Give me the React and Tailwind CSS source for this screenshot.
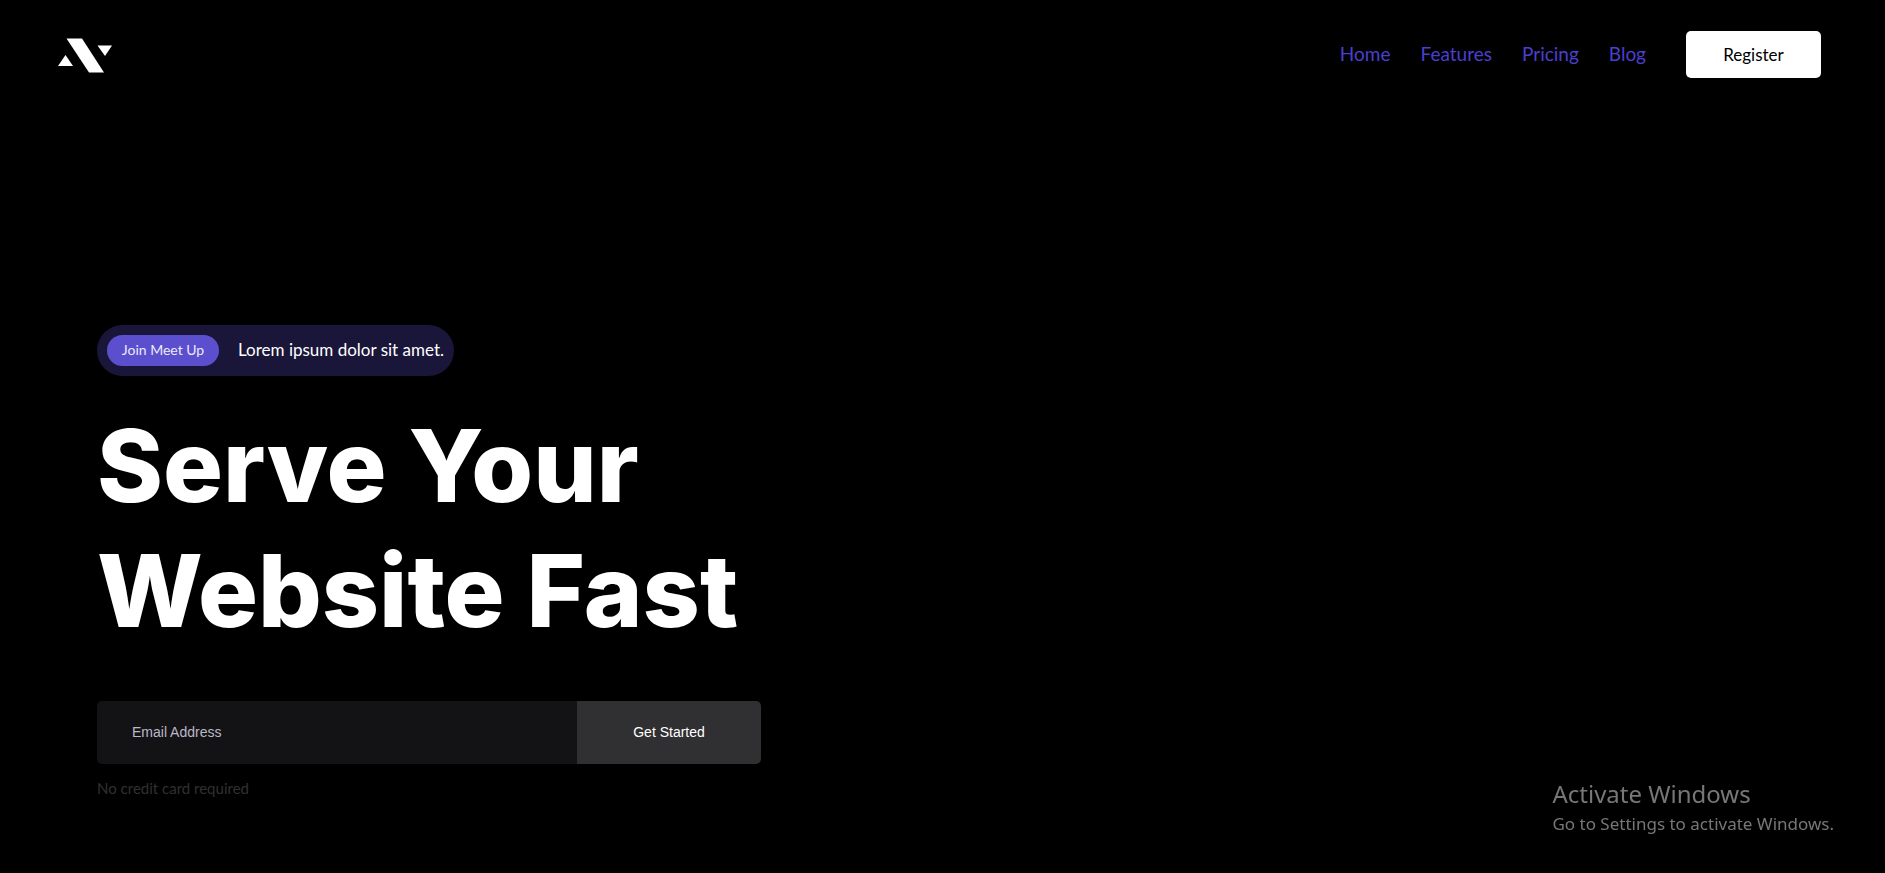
const navLinks = ["Home", "Features", "Pricing", "Blog"];

function Logo() {
  return (
    <svg className="h-9 w-14" viewBox="0 0 56 36" fill="#fff" aria-hidden="true">
      <path d="M8.5 0.5H24L46 34.5H31Z" />
      <path d="M0 28L7.5 17L15 28Z" />
      <path d="M39.5 7.5H54L47 18Z" />
    </svg>
  );
}

export default function App() {
  return (
    <div className="min-h-screen bg-black font-['Lato',sans-serif] text-white">
      <header className="flex items-center justify-between pt-[31px] pr-16 pl-[58px]">
        <a href="#home" aria-label="Homepage" className="pt-0.5">
          <Logo />
        </a>
        <nav className="flex items-center gap-10">
          <ul className="flex gap-[30px]">
            {navLinks.map((label) => (
              <li key={label}>
                <a href={`#${label.toLowerCase()}`} className="text-[19px] leading-6 text-[#4b3fd0]">
                  {label}
                </a>
              </li>
            ))}
          </ul>
          <button type="button" className="h-[47px] w-[135px] rounded-[5px] bg-white text-[17px] text-black">
            Register
          </button>
        </nav>
      </header>

      <main className="flex flex-col items-start px-[97px] pt-[247px]">
        <div className="flex h-[51px] items-center gap-[19px] rounded-full bg-[#1a163a] px-[10px]">
          <button type="button" className="h-[31px] w-28 rounded-full bg-[#5b4fce] pb-0.5 text-[14px] text-[#ebe9fa]">
            Join Meet Up
          </button>
          <p className="pb-0.5 text-[17px]">Lorem ipsum dolor sit amet.</p>
        </div>

        <h1 className="mt-[27px] font-['Inter',sans-serif] text-[100px] leading-[125px] font-extrabold">
          Serve Your
          <br />
          Website Fast
        </h1>

        <form
          className="mt-12 flex h-[63px] w-full max-w-[664px] overflow-hidden rounded-[5px] font-['Liberation_Sans',sans-serif] text-[14px]"
          onSubmit={(event) => event.preventDefault()}
        >
          <input
            type="email"
            aria-label="Email Address"
            placeholder="Email Address"
            className="min-w-0 flex-1 bg-[#131315] px-[35px] outline-none placeholder:text-[#bbb7c8]"
          />
          <button type="submit" className="w-[184px] bg-[#302f31]">
            Get Started
          </button>
        </form>
        <p className="mt-3 text-[15px] leading-6 text-[#303030]">No credit card required</p>
      </main>

      <aside className="fixed right-[51px] bottom-[35px] font-['Noto_Sans',sans-serif] text-[#777]">
        <p className="text-[24px] leading-8">Activate Windows</p>
        <p className="text-[17px] leading-7">Go to Settings to activate Windows.</p>
      </aside>
    </div>
  );
}
